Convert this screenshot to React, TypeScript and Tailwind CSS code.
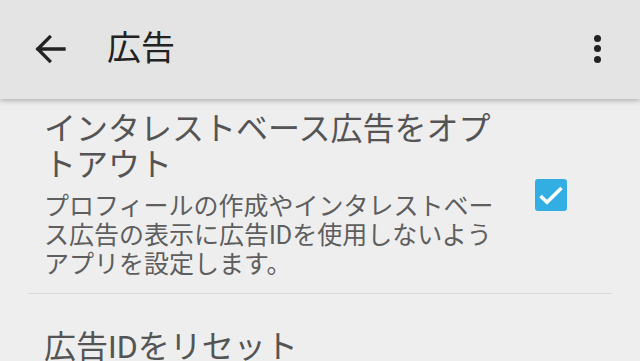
import { ReactNode } from "react";

const font = { fontFamily: 'Roboto, "Noto Sans CJK JP", sans-serif' };

const BackArrow = () => (
  <svg viewBox="0 0 24 24" className="w-[42px] h-[42px]" fill="none">
    <path
      d="M20 12H5.2M11.8 5.2L5 12l6.8 6.8"
      stroke="#222"
      strokeWidth="1.9"
      strokeLinecap="square"
    />
  </svg>
);

const MoreDots = () => (
  <div className="flex flex-col items-center gap-[3.5px]">
    <span className="w-[7px] h-[7px] rounded-full bg-[#222]" />
    <span className="w-[7px] h-[7px] rounded-full bg-[#222]" />
    <span className="w-[7px] h-[7px] rounded-full bg-[#222]" />
  </div>
);

const Checkbox = () => (
  <div className="w-[32px] h-[32px] rounded-[3px] bg-[#33aee2]">
    <svg viewBox="0 0 32 32" className="w-[32px] h-[32px]" fill="none">
      <path d="M5.5 17l6.5 6.2L26.5 9" stroke="#fff" strokeWidth="3.6" />
    </svg>
  </div>
);

const Lines = ({ lines, className }: { lines: string[]; className: string }) => (
  <div className={className}>
    {lines.map((l) => (
      <div key={l} className="whitespace-nowrap">
        {l}
      </div>
    ))}
  </div>
);

const PrefRow = ({ children, action }: { children: ReactNode; action?: ReactNode }) => (
  <div className="flex items-center pl-[44px]">
    <div className="w-[460px]">{children}</div>
    {action && <div className="ml-[31px]">{action}</div>}
  </div>
);

export default function App() {
  return (
    <div className="w-[640px] h-[361px] overflow-hidden bg-[#eeeeee] relative" style={font}>
      {/* App bar */}
      <header className="relative z-10 h-[99px] bg-[#e4e4e4] flex items-center shadow-[0_2px_5px_rgba(0,0,0,0.25)]">
        <div className="ml-[29px] mt-[-2px]">
          <BackArrow />
        </div>
        <h1 className="ml-[36px] text-[34px] leading-none text-[#222] mt-[-4px]">広告</h1>
        <div className="ml-auto mr-[39px] mt-[-2px]">
          <MoreDots />
        </div>
      </header>

      {/* Preferences */}
      <div className="pt-[12px]">
        <PrefRow action={<Checkbox />}>
          <Lines
            className="text-[32px] leading-[36px] text-[#545454]"
            lines={["インタレストベース広告をオプ", "トアウト"]}
          />
          <Lines
            className="mt-[9px] text-[25px] leading-[29px] text-[#5e5e5e]"
            lines={[
              "プロフィールの作成やインタレストベー",
              "ス広告の表示に広告IDを使用しないよう",
              "アプリを設定します。",
            ]}
          />
        </PrefRow>
        <div className="mx-[28px] mt-[14px] h-px bg-[#d8d8d8]" />
        <div className="pt-[35px]">
          <PrefRow>
            <Lines className="text-[32px] leading-[36px] text-[#545454]" lines={["広告IDをリセット"]} />
          </PrefRow>
        </div>
      </div>
    </div>
  );
}
